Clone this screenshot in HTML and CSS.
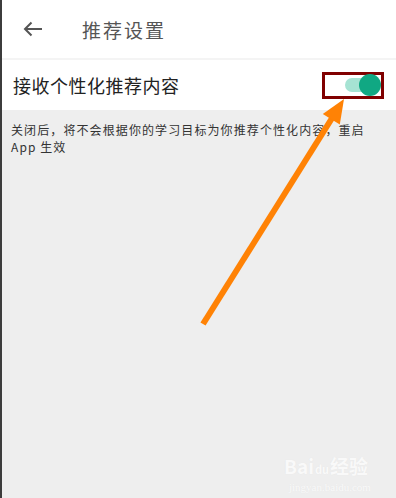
FILE: index.html
```html
<!DOCTYPE html>
<html lang="zh-CN">
<head>
  <meta charset="UTF-8" />
  <meta name="viewport" content="width=device-width, initial-scale=1.0"/>
  <title>推荐设置</title>
  <link rel="stylesheet" href="styles.css">
</head>
<body>
  <div class="screen">
    <!-- 顶部栏 -->
    <header class="topbar">
      <svg class="back" width="20" height="16" viewBox="0 0 20 16">
        <path d="M19 8H2M8.5 1.5L2 8l6.5 6.5" fill="none" stroke="#555" stroke-width="2"/>
      </svg>
      <h1 class="title">推荐设置</h1>
    </header>

    <!-- 开关行 -->
    <div class="setting-row">
      <span class="setting-label">接收个性化推荐内容</span>
      <div class="mark-box">
        <div class="switch">
          <span class="track"></span>
          <span class="thumb"></span>
        </div>
      </div>
    </div>

    <p class="desc">关闭后，将不会根据你的学习目标为你推荐个性化内容，重启App 生效</p>

    <div class="watermark">
      <div class="wm-logo">Bai<span class="wm-du">du</span>经验</div>
      <div class="wm-url">jingyan.baidu.com</div>
    </div>

    <!-- 标注箭头 -->
    <svg class="annotation" width="396" height="498" viewBox="0 0 396 498">
      <line x1="203" y1="324" x2="334" y2="115" stroke="#ff8205" stroke-width="6"/>
      <polygon points="344,99 322.8,114 339.8,124.6" fill="#ff8205"/>
    </svg>
  </div>
</body>
</html>
```

FILE: styles.css
```css
body {
  margin: 0;
  font-family: "Noto Sans CJK SC", "Liberation Sans", sans-serif;
  background-color: #eeeeee;
}

.screen {
  position: relative;
  width: 394px;
  height: 498px;
  border-left: 2px solid #3c3c3c;
  background-color: #eeeeee;
  overflow: hidden;
}

.topbar {
  display: flex;
  align-items: center;
  height: 58px;
  padding-left: 21px;
  background-color: #fff;
  border-bottom: 2px solid #f4f4f4;
}

.back {
  display: block;
}

.title {
  margin: 0 0 0 39px;
  font-size: 19px;
  font-weight: normal;
  letter-spacing: 2px;
  color: #555;
}

.setting-row {
  display: flex;
  align-items: center;
  justify-content: space-between;
  height: 50px;
  padding: 0 12px 0 11px;
  background-color: #fff;
}

.setting-label {
  font-size: 18px;
  color: #222;
  letter-spacing: 0.5px;
}

.mark-box {
  box-sizing: border-box;
  width: 62px;
  height: 27px;
  border: 3px solid #800000;
  display: flex;
  align-items: center;
  justify-content: flex-end;
}

.switch {
  position: relative;
  width: 36px;
  height: 22px;
}

.track {
  position: absolute;
  left: 0;
  top: 4px;
  width: 28px;
  height: 14px;
  border-radius: 7px;
  background-color: #a6e3d3;
}

.thumb {
  position: absolute;
  right: 0;
  top: 0;
  width: 22px;
  height: 22px;
  border-radius: 50%;
  background-color: #10a883;
}

.desc {
  margin: 0;
  padding: 11px 12px 0 9px;
  font-size: 12px;
  line-height: 17px;
  letter-spacing: 1.1px;
  color: #333;
}

.watermark {
  position: absolute;
  left: 282px;
  top: 454px;
  color: #f9f9f9;
  text-shadow: 0 0 1px #e4e4e4;
}

.wm-logo {
  font-size: 19px;
  font-weight: bold;
  line-height: 24px;
  white-space: nowrap;
}

.wm-du {
  font-size: 11px;
  margin: 0 1px;
}

.wm-url {
  font-family: "Liberation Serif", serif;
  font-size: 11px;
  line-height: 12px;
  padding-left: 5px;
}

.annotation {
  position: absolute;
  left: -2px;
  top: 0;
}
```
